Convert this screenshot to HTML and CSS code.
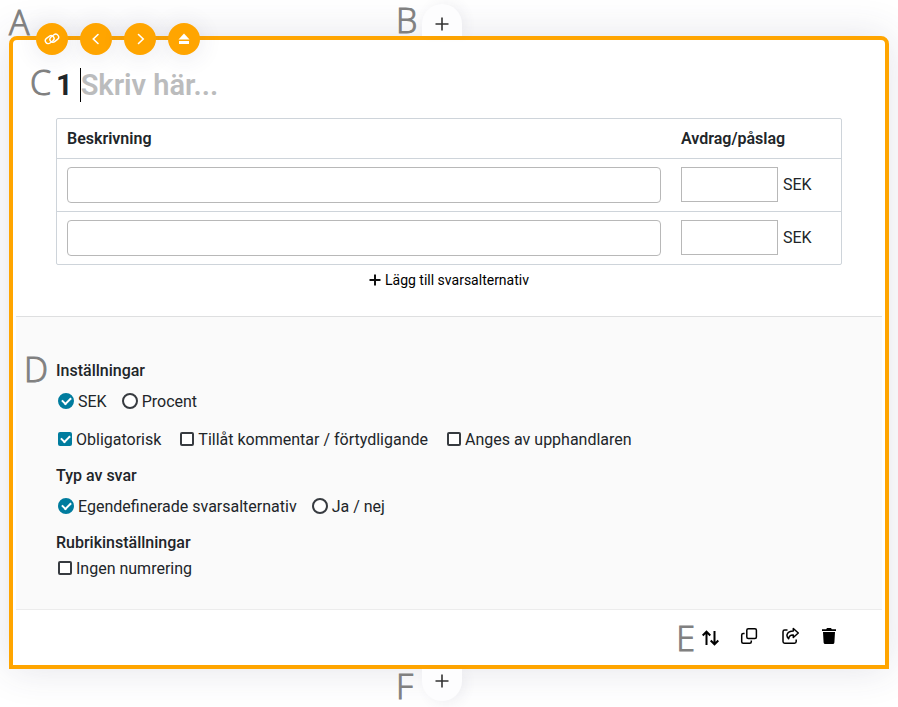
FILE: index.html
```html
<!DOCTYPE html>
<html lang="sv">
<head>
<meta charset="utf-8">
<title>Fråga</title>
<link rel="stylesheet" href="styles.css">
</head>
<body>
<main class="page">
  <span class="mark mark-a">A</span>
  <span class="mark mark-b">B</span>
  <button class="insert insert-top" type="button" aria-label="Infoga före">
    <svg width="14" height="14" viewBox="0 0 14 14"><path d="M7 .5v13M.5 7h13" stroke="#333" stroke-width="1.6"/></svg>
  </button>
  <article class="card">
    <nav class="tools">
      <button class="tool" type="button" aria-label="Länka">
        <svg width="16" height="16" viewBox="0 0 16 16" fill="none" stroke="#fff" stroke-width="1.4" stroke-linecap="round"><rect x="1" y="5.7" width="9.4" height="5.8" rx="2.9" transform="rotate(-38 5.7 8.6)"/><rect x="5.6" y="4.3" width="9.4" height="5.8" rx="2.9" transform="rotate(-38 10.3 7.2)"/></svg>
      </button>
      <button class="tool" type="button" aria-label="Föregående">
        <svg width="16" height="16" viewBox="0 0 16 16" fill="none" stroke="#fff" stroke-width="1.6" stroke-linecap="round"><path d="M10 3.5 5.3 8 10 12.5"/></svg>
      </button>
      <button class="tool" type="button" aria-label="Nästa">
        <svg width="16" height="16" viewBox="0 0 16 16" fill="none" stroke="#fff" stroke-width="1.6" stroke-linecap="round"><path d="M6.5 3.5 11.2 8 6.5 12.5"/></svg>
      </button>
      <button class="tool" type="button" aria-label="Fäll ihop">
        <svg width="16" height="16" viewBox="0 0 16 16" fill="#fff"><path d="M8 2.500 13.500 8.500h-11z"/><path d="M3 10h10v3H3z"/></svg>
      </button>
    </nav>
    <span class="mark mark-c">C</span>
    <header class="heading">
      <label class="number" for="title">1</label>
      <input class="title" id="title" type="text" placeholder="Skriv här...">
    </header>
    <div class="answers">
      <table class="options">
        <thead>
          <tr><th>Beskrivning</th><th class="amount-col">Avdrag/påslag</th></tr>
        </thead>
        <tbody>
          <tr>
            <td><input class="desc" type="text" aria-label="Beskrivning 1"></td>
            <td><div class="amount"><input class="sum" id="sum1" type="text"><label for="sum1">SEK</label></div></td>
          </tr>
          <tr>
            <td><input class="desc" type="text" aria-label="Beskrivning 2"></td>
            <td><div class="amount"><input class="sum" id="sum2" type="text"><label for="sum2">SEK</label></div></td>
          </tr>
        </tbody>
      </table>
      <button class="add" type="button">
        <svg width="12" height="12" viewBox="0 0 12 12"><path d="M6 .5v11M.5 6h11" stroke="#111" stroke-width="2"/></svg>
        Lägg till svarsalternativ
      </button>
    </div>
    <section class="settings">
      <span class="mark mark-d">D</span>
      <h2>Inställningar</h2>
      <div class="row">
        <label class="choice"><input type="radio" name="unit" checked>SEK</label>
        <label class="choice"><input type="radio" name="unit">Procent</label>
      </div>
      <div class="row row-checks">
        <label class="choice"><input type="checkbox" checked>Obligatorisk</label>
        <label class="choice"><input type="checkbox">Tillåt kommentar / förtydligande</label>
        <label class="choice"><input type="checkbox">Anges av upphandlaren</label>
      </div>
      <h2>Typ av svar</h2>
      <div class="row">
        <label class="choice"><input type="radio" name="kind" checked>Egendefinerade svarsalternativ</label>
        <label class="choice"><input type="radio" name="kind">Ja / nej</label>
      </div>
      <h2>Rubrikinställningar</h2>
      <div class="row row-tight">
        <label class="choice"><input type="checkbox">Ingen numrering</label>
      </div>
    </section>
    <footer class="actions">
      <span class="mark mark-e">E</span>
      <button class="action sort" type="button" aria-label="Sortera">
        <svg width="18" height="16" viewBox="0 0 18 16" fill="none" stroke="#000" stroke-width="2"><path d="M5.500 15V2M1.700 5.500l3.800-3.800 3.800 3.800M13.500 1v13M9.700 10.500l3.800 3.800 3.800-3.800"/></svg>
      </button>
      <button class="action" type="button" aria-label="Kopiera">
        <svg width="18" height="18" viewBox="0 0 18 18" fill="none" stroke="#000" stroke-width="1.5"><rect x="6.8" y="1.8" width="9.6" height="9.6" rx="1.5"/><path d="M4.6 6.6H3.200q-1.500 0-1.500 1.500v6.600q0 1.500 1.500 1.500h6.600q1.500 0 1.500-1.500v-1.200"/></svg>
      </button>
      <button class="action" type="button" aria-label="Dela">
        <svg width="20" height="18" viewBox="0 0 20 18" fill="none" stroke="#000" stroke-width="1.5" stroke-linejoin="round"><path d="M8.500 3H5.700Q4 3 4 4.700v9.800q0 1.700 1.700 1.700h9.800q1.700 0 1.700-1.700V12.500"/><path d="M14.300 1.500 19.300 6l-5 4.500V8Q10 7.800 9.700 11.800 7.300 9.800 8.200 7.200 9.500 4 14.300 4z"/></svg>
      </button>
      <button class="action" type="button" aria-label="Ta bort">
        <svg width="18" height="18" viewBox="0 0 18 18" fill="#000"><path d="M2 2.200h4.200L7 1h4l.8 1.200H16v1.900H2zM3 5h12l-.6 10.500q-.1 1.500-1.600 1.500H5.200q-1.500 0-1.600-1.500z"/></svg>
      </button>
    </footer>
  </article>
  <button class="insert insert-bottom" type="button" aria-label="Infoga efter">
    <svg width="14" height="14" viewBox="0 0 14 14"><path d="M7 .5v13M.5 7h13" stroke="#333" stroke-width="1.6"/></svg>
  </button>
  <span class="mark mark-f">F</span>
</main>
</body>
</html>
```

FILE: styles.css
```css
* {
  box-sizing: border-box;
}

body {
  margin: 0;
  background: #fff;
  color: #212529;
  font: 16px/24px Roboto, "Liberation Sans", sans-serif;
}

button {
  padding: 0;
  border: 0;
  background: none;
  color: inherit;
  font: inherit;
  cursor: pointer;
}

svg {
  display: block;
}

.page {
  position: relative;
  padding: 36px 9px 38px;
}

.card {
  position: relative;
  z-index: 1;
  padding: 28px 3px 0;
  border: 4px solid #ffa500;
  border-radius: 8px 8px 0 0;
  background: #fff;
  box-shadow: 0 0 40px rgba(60, 60, 100, .14);
}

/* Reference letters */
.mark {
  position: absolute;
  z-index: 3;
  color: #808080;
  font: 300 34px/36px "Open Sans", "Noto Sans", sans-serif;
  -webkit-text-stroke: 1px #808080;
}

.mark-a { left: 9px; top: 4px; }
.mark-b { left: 396px; top: 2px; }
.mark-c { left: 17px; top: 24px; }
.mark-d { left: 8px; top: 34px; }
.mark-e { right: 187px; top: 10px; }
.mark-f { left: 396px; bottom: 3px; }

/* Round insert buttons tucked behind the card edge */
.insert {
  position: absolute;
  z-index: 2;
  left: 422px;
  display: flex;
  justify-content: center;
  width: 40px;
  height: 32px;
  background: #fdfdfe;
}

.insert-top {
  top: 4px;
  padding-top: 13px;
  border-radius: 20px 20px 0 0;
  box-shadow: 4px -2px 12px rgba(60, 60, 100, .06);
}

.insert-bottom {
  bottom: 6px;
  padding-top: 5px;
  border-radius: 0 0 20px 20px;
  box-shadow: 4px 4px 12px rgba(60, 60, 100, .06);
}

.tools {
  position: absolute;
  left: 23px;
  top: -17px;
  display: flex;
  gap: 12px;
}

.tool {
  display: grid;
  place-items: center;
  width: 32px;
  height: 32px;
  border-radius: 50%;
  background: #ffa500;
  box-shadow: 0 2px 24px rgba(60, 60, 100, .12);
}

.heading {
  display: flex;
  gap: 7px;
  padding: 0 40px;
  font-size: 29px;
  font-weight: 700;
  line-height: 34px;
}

.title {
  flex: 1;
  min-width: 0;
  height: 34px;
  padding: 0;
  border: 0;
  border-left: 1px solid #000;
  outline: 0;
  background: none;
  color: inherit;
  font: inherit;
}

.title::placeholder {
  color: #bbbcbd;
  font-weight: 600;
  opacity: 1;
}

.answers {
  display: flex;
  flex-direction: column;
  align-items: center;
  padding: 16px 40px 21px;
}

.options {
  width: 100%;
  border: 1px solid #ced4da;
  border-radius: 2px;
  border-spacing: 0;
  table-layout: fixed;
}

.options th {
  height: 39px;
  padding: 0 10px;
  text-align: left;
  font-weight: 600;
}

.options td {
  height: 53px;
  padding: 0 10px;
  border-top: 1px solid #ced4da;
}

.options .amount-col {
  width: 170px;
}

.desc,
.sum {
  display: block;
  height: 36px;
  border: 1px solid #b8b8b8;
  background: #fff;
  font: inherit;
}

.desc {
  width: 100%;
  border-radius: 4px;
}

.sum {
  align-self: flex-start;
  width: 97px;
  height: 35px;
}

.amount {
  display: flex;
  align-items: center;
  gap: 5px;
  height: 36px;
}

.add {
  display: flex;
  align-items: center;
  gap: 4px;
  height: 30px;
  color: #000;
  font-size: 14px;
}

.settings {
  position: relative;
  padding: 41px 40px 28px;
  border-top: 1px solid #dedfe0;
  border-bottom: 1px solid #ececec;
  background: #fafafa;
}

.settings h2 {
  margin: 11px 0 0;
  font-size: 16px;
  font-weight: 500;
  line-height: 26px;
}

.settings .mark + h2 {
  margin-top: 0;
}

.row {
  display: flex;
  flex-wrap: wrap;
  gap: 15px;
  padding-left: 2px;
  margin-top: 6px;
}

.row-checks {
  gap: 19px;
  margin-top: 14px;
}

.row-tight {
  margin-top: 1px;
}

.choice {
  display: flex;
  align-items: center;
  gap: 4px;
}

.choice input {
  appearance: none;
  width: 16px;
  height: 16px;
  margin: 0 0 2px;
  border: 2px solid #373b40;
  border-radius: 50%;
  background: #fff;
}

.choice input[type="checkbox"] {
  width: 14px;
  height: 14px;
  border-radius: 2px;
}

.choice input:checked {
  display: grid;
  place-items: center;
  border-color: #007c9e;
  background: #007c9e;
}

.choice input:checked::after {
  content: "";
  width: 7px;
  height: 4px;
  margin-bottom: 2px;
  border: solid #fff;
  border-width: 0 0 2px 2px;
  transform: rotate(-45deg);
}

.actions {
  position: relative;
  display: flex;
  justify-content: flex-end;
  align-items: center;
  gap: 21px;
  height: 55px;
  padding: 0 44px 4px;
}

.sort {
  margin-top: 4px;
}
```
